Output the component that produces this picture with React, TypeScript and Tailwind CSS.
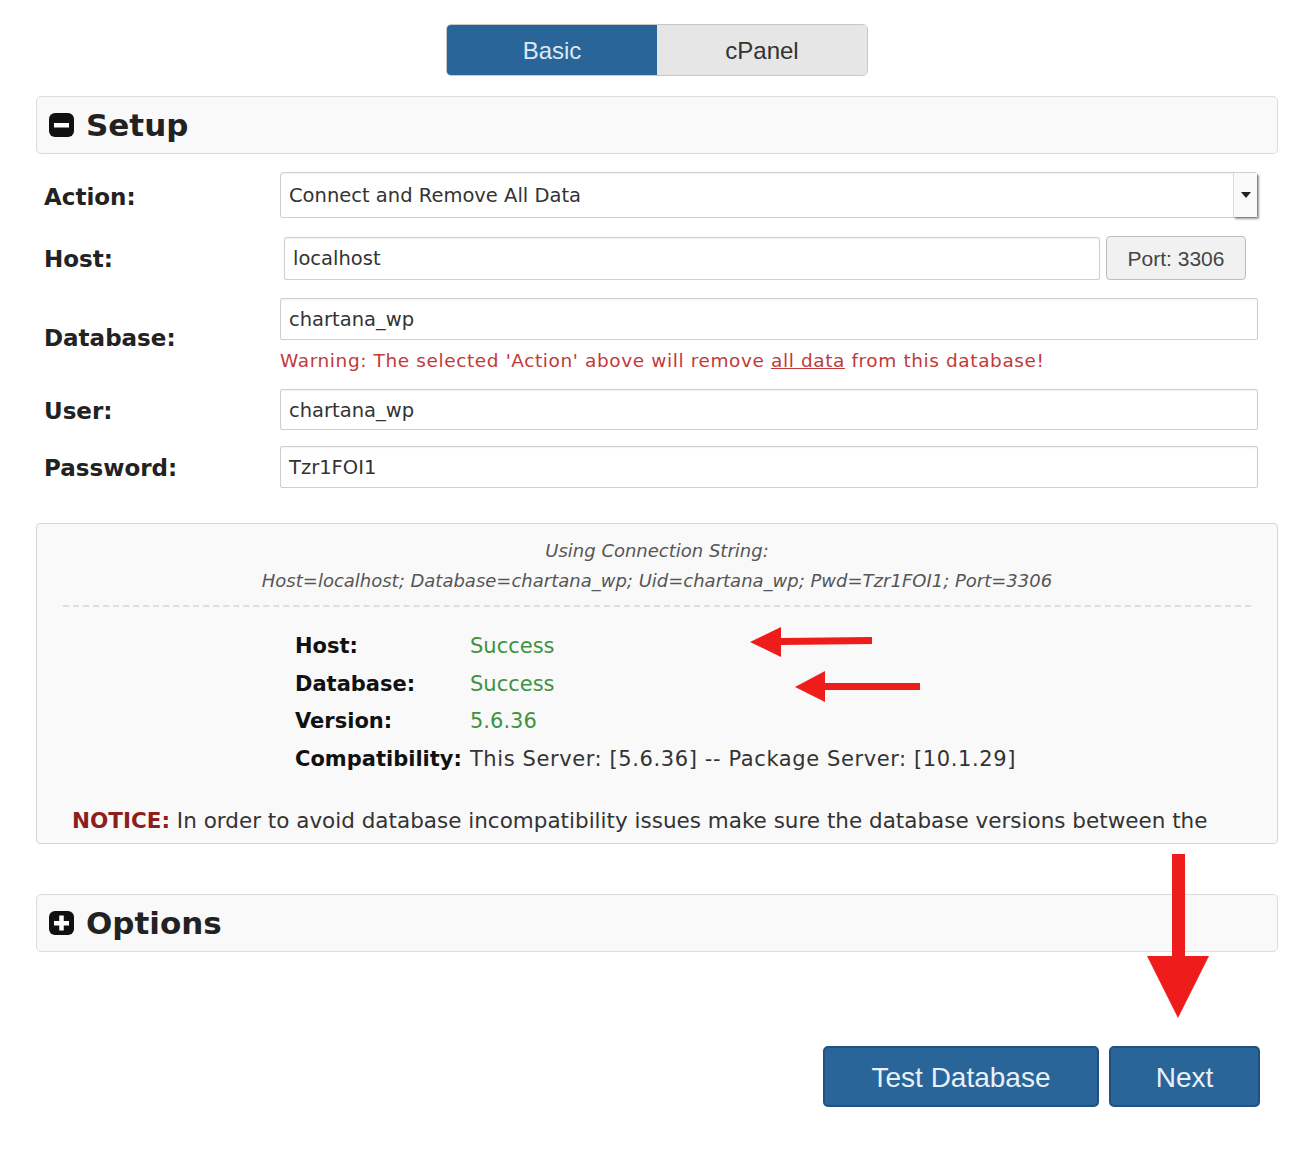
export default function App() {
  const dv = "font-['DejaVu_Sans',Verdana,sans-serif]";
  const ar = "font-['Liberation_Sans',Arial,sans-serif]";

  return (
    <div className={`relative min-h-[1153px] w-[1295px] bg-white ${dv}`}>
      <div className="ml-[36px] w-[1242px] pt-[24px]">

        {/* TABS */}
        <div className="flex justify-center">
          <div className={`flex h-[52px] w-[422px] overflow-hidden rounded-[5px] border border-[#c8c8c8] ${ar} text-[24px]`}>
            <div className="flex w-[210px] items-center justify-center bg-[#2a6599] pt-[2px] text-[#dce8f3]">Basic</div>
            <div className="flex flex-1 items-center justify-center bg-[#e6e6e6] pt-[2px] text-[#333]">cPanel</div>
          </div>
        </div>

        {/* SETUP HEADER */}
        <div className="mt-[20px] flex h-[58px] items-center gap-[12px] rounded-[5px] border-[1.5px] border-[#dcdcdc] bg-[#f9f9fa] pl-[12px]">
          <svg width="25" height="24" viewBox="0 0 25 24">
            <rect x="0" y="0" width="25" height="24" rx="6" fill="#111" />
            <rect x="5" y="10" width="15" height="4.5" fill="#fff" />
          </svg>
          <span className="pt-[1px] text-[31px] font-bold text-[#222]">Setup</span>
        </div>

        {/* FORM */}
        <div className="pl-[8px] pr-[20px] pt-[18px]">
          <div className="flex items-center">
            <div className="w-[236px] pt-[4px] text-[23px] font-bold text-[#222]">Action:</div>
            <div className="flex h-[46px] flex-1 items-center rounded-[3px] border border-[#cfcfcf] bg-white shadow-[inset_0_1px_2px_rgba(0,0,0,0.06)]">
              <span className="flex-1 pl-[8px] pt-[2px] text-[19.5px] text-[#333]">Connect and Remove All Data</span>
              <div className="flex h-[44px] w-[24px] items-center justify-center border-l border-[#ddd] bg-[#fafafa] shadow-[2px_2px_2px_rgba(0,0,0,0.4)]">
                <svg width="10" height="6" viewBox="0 0 10 6"><path d="M0 0h10L5 6z" fill="#222" /></svg>
              </div>
            </div>
          </div>

          <div className="mt-[18px] flex items-center">
            <div className="w-[240px] pt-[3px] text-[23px] font-bold text-[#222]">Host:</div>
            <div className="flex h-[43px] w-[816px] items-center rounded-[2px] border border-[#cfcfcf] bg-white pl-[8px] pt-[2px] text-[19.5px] text-[#333] shadow-[inset_0_1px_2px_rgba(0,0,0,0.06)]">
              localhost
            </div>
            <div className={`ml-[6px] flex h-[44px] w-[140px] items-center justify-center rounded-[4px] border border-[#bdbdbd] bg-[#f1f1f1] pt-[2px] ${ar} text-[21px] text-[#444]`}>
              Port: 3306
            </div>
          </div>

          <div className="mt-[18px] flex items-start">
            <div className="w-[236px] pt-[23px] text-[23px] font-bold text-[#222]">Database:</div>
            <div className="flex-1">
              <div className="flex h-[42px] items-center rounded-[2px] border border-[#cfcfcf] bg-white pl-[8px] pt-[2px] text-[19.5px] text-[#333] shadow-[inset_0_1px_2px_rgba(0,0,0,0.06)]">
                chartana_wp
              </div>
              <div className="mt-[9px] text-[18.5px] leading-[24px] tracking-[0.6px] text-[#c2393a]">
                Warning: The selected 'Action' above will remove <span className="underline">all data</span> from this database!
              </div>
            </div>
          </div>

          <div className="mt-[16px] flex items-center">
            <div className="w-[236px] pt-[3px] text-[23px] font-bold text-[#222]">User:</div>
            <div className="flex h-[41px] flex-1 items-center rounded-[2px] border border-[#cfcfcf] bg-white pl-[8px] pt-[2px] text-[19.5px] text-[#333] shadow-[inset_0_1px_2px_rgba(0,0,0,0.06)]">
              chartana_wp
            </div>
          </div>

          <div className="mt-[16px] flex items-center">
            <div className="w-[236px] pt-[3px] text-[23px] font-bold text-[#222]">Password:</div>
            <div className="flex h-[42px] flex-1 items-center rounded-[2px] border border-[#cfcfcf] bg-white pl-[8px] pt-[2px] text-[19.5px] text-[#333] shadow-[inset_0_1px_2px_rgba(0,0,0,0.06)]">
              Tzr1FOI1
            </div>
          </div>
        </div>

        {/* CONNECTION RESULT */}
        <div className="mt-[35px] h-[321px] overflow-hidden rounded-[4px] border-[1.5px] border-[#d6d6d6] bg-[#f9f9fa]">
          <div className="pt-[12px] text-center text-[18px] italic leading-[30px] text-[#555]">
            <div>Using Connection String:</div>
            <div>Host=localhost; Database=chartana_wp; Uid=chartana_wp; Pwd=Tzr1FOI1; Port=3306</div>
          </div>
          <div className="mx-[26px] mt-[9px] border-t-2 border-dashed border-[#dedede]" />

          <div className="mt-[21px] pl-[258px] text-[21px] leading-[37.5px]">
            {[
              ["Host:", "Success", "text-[#3f923f]"],
              ["Database:", "Success", "text-[#3f923f]"],
              ["Version:", "5.6.36", "text-[#3f923f]"],
            ].map(([k, v, c]) => (
              <div key={k} className="flex">
                <span className="w-[175px] font-bold text-[#111]">{k}</span>
                <span className={c}>{v}</span>
              </div>
            ))}
            <div className="flex">
              <span className="font-bold text-[#111]">Compatibility:</span>
              <span className="ml-[8px] text-[21px] tracking-[0.6px] text-[#333]">This Server: [5.6.36] -- Package Server: [10.1.29]</span>
            </div>
          </div>

          <div className="mt-[27px] pl-[35px] pr-[50px] text-[21.5px] leading-[31px] text-[#333]">
            <span className="font-bold text-[#8e1d1d]">NOTICE:</span> In order to avoid database incompatibility issues make sure the database versions between the
            build and install servers are as compatible as possible. If the package was created on a newer database version
          </div>
        </div>

        {/* OPTIONS HEADER */}
        <div className="mt-[50px] flex h-[58px] items-center gap-[12px] rounded-[5px] border-[1.5px] border-[#dcdcdc] bg-[#f9f9fa] pl-[12px]">
          <svg width="25" height="24" viewBox="0 0 25 24">
            <rect x="0" y="0" width="25" height="24" rx="6" fill="#111" />
            <rect x="5" y="10" width="15" height="4.5" fill="#fff" />
            <rect x="10.25" y="4.5" width="4.5" height="15" fill="#fff" />
          </svg>
          <span className="pt-[1px] text-[31px] font-bold text-[#222]">Options</span>
        </div>

        {/* BUTTONS */}
        <div className={`mt-[94px] flex justify-end gap-[10px] pr-[18px] ${ar} text-[28px] text-[#e8f0f8]`}>
          <div className="flex h-[61px] w-[276px] items-center justify-center rounded-[5px] border-2 border-[#21527f] bg-[#2a6599] pt-[2px]">Test Database</div>
          <div className="flex h-[61px] w-[151px] items-center justify-center rounded-[5px] border-2 border-[#21527f] bg-[#2a6599] pt-[2px]">Next</div>
        </div>
      </div>

      {/* ANNOTATION ARROWS */}
      <svg className="absolute left-0 top-0" width="1295" height="1153" viewBox="0 0 1295 1153" pointerEvents="none">
        <path d="M750 642 L781 627 L781 638 L872 637 L872 644 L781 645 L781 657 Z" fill="#ef1c1c" />
        <path d="M795 687 L825 671 L825 683 L920 683 L920 690 L825 690 L825 702 Z" fill="#ef1c1c" />
        <path d="M1172 854 L1185 854 L1185 956 L1209 956 L1178 1018 L1147 956 L1172 956 Z" fill="#ef1c1c" />
      </svg>
    </div>
  );
}
